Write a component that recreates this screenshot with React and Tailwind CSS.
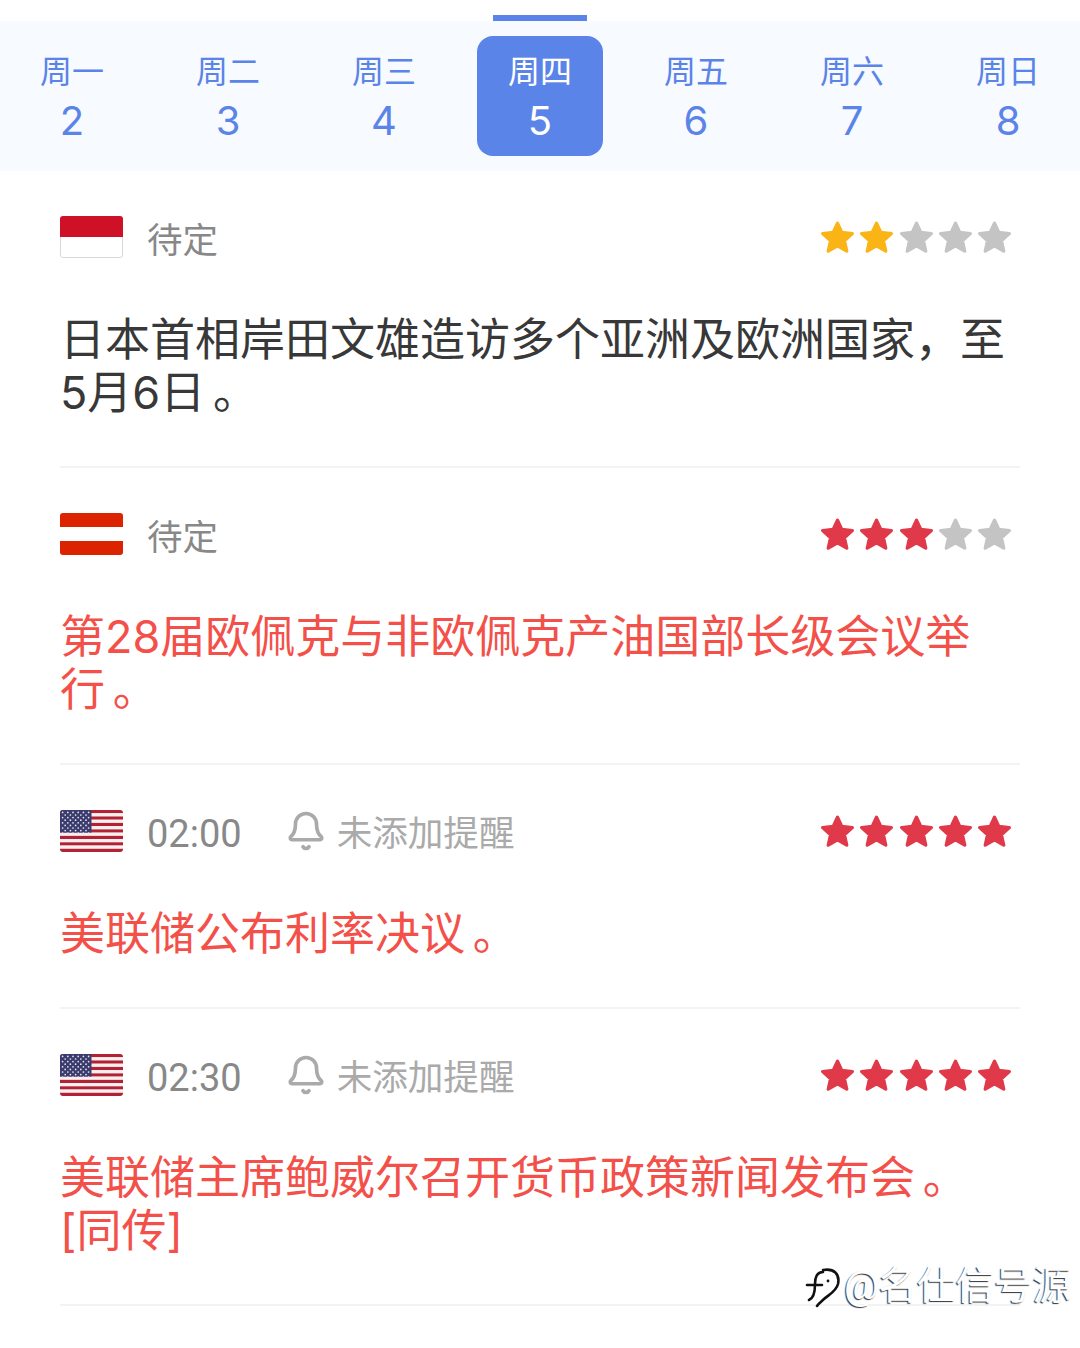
import React from "react";
import { Bell } from "lucide-react";

const days = [["周一","2"],["周二","3"],["周三","4"],["周四","5",true],["周五","6"],["周六","7"],["周日","8"]];

function Star({ color }) {
  return (
    <svg width="33" height="33" viewBox="1.5 1.5 30 30" className="block shrink-0">
      <path d="M16.5 3.5 L20.4 11.9 L30 12.9 L22.8 19.4 L24.9 28.9 L16.5 24 L8.1 28.9 L10.2 19.4 L3 12.9 L12.6 11.9 Z" fill={color} stroke={color} strokeWidth="3" strokeLinejoin="round" />
    </svg>
  );
}

function Stars({ n, color }) {
  return (
    <div className="flex gap-[6.2px]">
      {[0,1,2,3,4].map((i) => <Star key={i} color={i < n ? color : "#c4c4c4"} />)}
    </div>
  );
}

function IdFlag() {
  return (
    <div className="w-[63px] h-[42px] rounded-[3px] overflow-hidden flex flex-col">
      <div className="h-[21px] bg-[#ce1126]" />
      <div className="flex-1 bg-white border border-t-0 border-[#d8d8d8] rounded-b-[3px]" />
    </div>
  );
}

function AtFlag() {
  return (
    <div className="w-[63px] h-[42px] rounded-[3px] overflow-hidden flex flex-col">
      <div className="h-[14px] bg-[#dc2300]" />
      <div className="h-[14px] bg-white" />
      <div className="h-[14px] bg-[#dc2300]" />
    </div>
  );
}

function UsFlag() {
  const stripes = [];
  for (let i = 0; i < 13; i++) {
    stripes.push(<rect key={i} x="0" y={i * 42 / 13} width="63" height={42 / 13 + 0.05} fill={i % 2 ? "#f4f0f0" : "#b22234"} />);
  }
  const dots = [];
  for (let r = 0; r < 9; r++) {
    const cols = r % 2 ? 5 : 6;
    for (let c = 0; c < cols; c++) {
      dots.push(<circle key={r + "-" + c} cx={(r % 2 ? 5.2 : 2.6) + c * 5.2} cy={2.4 + r * 2.6} r="0.85" fill="#e8e8f4" />);
    }
  }
  return (
    <svg width="63" height="42" viewBox="0 0 63 42" className="block rounded-[3px] shrink-0">
      {stripes}
      <rect x="0" y="0" width="31.5" height="22.6" fill="#3c3b6e" />
      {dots}
    </svg>
  );
}

function Item({ flag, time, stars, starColor, red, children }) {
  return (
    <div className="mx-[60px] pt-[45px] pb-[47px] border-b-2 border-[#f3f3f3]">
      <div className="flex items-center h-[42px]">
        <div className="shrink-0">{flag}</div>
        {time ? (
          <>
            <span className="ml-[24px] pt-[6px] text-[38px] leading-[42px] text-[#888888]">{time}</span>
            <Bell size={42} strokeWidth={2.1} color="#aaaaaa" className="ml-[43px] shrink-0" />
            <span className="ml-[10px] pt-[6px] text-[35.6px] leading-[42px] text-[#aaaaaa]">未添加提醒</span>
          </>
        ) : (
          <span className="ml-[24px] pt-[8px] text-[35.5px] leading-[42px] text-[#888888]">待定</span>
        )}
        <div className="ml-auto mr-[9px]"><Stars n={stars} color={starColor} /></div>
      </div>
      <p className={"mt-[55px] text-[45px] leading-[53px] [word-spacing:-5px] font-['Inter','Noto_Sans_CJK_SC',sans-serif] " + (red ? "text-[#f4504a]" : "text-[#383838]")}>{children}</p>
    </div>
  );
}

export default function App() {
  return (
    <div className="relative w-[1080px] h-[1348px] overflow-hidden bg-white font-['Roboto','Noto_Sans_CJK_SC',sans-serif]">
      <div className="pt-[15px]">
        <div className="ml-[493px] w-[94px] h-[6px] bg-[#5b84e8]" />
        <div className="h-[150px] bg-[#f7faff] flex justify-center pt-[15px]">
          {days.map(([a, b, active]) => (
            <div key={a} className="w-[156px] shrink-0 flex justify-center">
              <div className={"w-[126px] h-[120px] rounded-[16px] flex flex-col items-center pt-[15px] " + (active ? "bg-[#5b84e8] text-white" : "text-[#5b84e8]")}>
                <span className="text-[32px] leading-[42px]">{a}</span>
                <span className="pt-[3px] text-[40px] leading-[50px] font-['Inter',sans-serif]">{b}</span>
              </div>
            </div>
          ))}
        </div>
      </div>
      <Item flag={<IdFlag />} stars={2} starColor="#fbb416">日本首相岸田文雄造访多个亚洲及欧洲国家，至5月6日 。</Item>
      <Item flag={<AtFlag />} stars={3} starColor="#e0394a" red>第28届欧佩克与非欧佩克产油国部长级会议举<span className="whitespace-nowrap inline-block">行 。</span></Item>
      <Item flag={<UsFlag />} time="02:00" stars={5} starColor="#e0394a" red>美联储公布利率决议 。</Item>
      <Item flag={<UsFlag />} time="02:30" stars={5} starColor="#e0394a" red>美联储主席鲍威尔召开货币政策新闻发布会 。<span className="whitespace-nowrap inline-block">[同传]</span></Item>
      <div className="absolute left-[804px] top-[1262px] flex items-center">
        <svg width="40" height="48" viewBox="0 0 40 48" className="shrink-0">
          <path d="M3 23 H18 M19 10 C13 10 11 15 11 22 C11 30 10 36 5 38 M19 8 C30 6 36 12 34 22 C32 30 24 33 20 37 C18 39 15 41 13 44" fill="none" stroke="#111111" strokeWidth="2.6" strokeLinecap="round" />
          <circle cx="24" cy="19" r="1.4" fill="#111111" />
        </svg>
        <span className="text-[38.5px] leading-[46px] text-white [text-shadow:-1px_1px_1px_#333333]">@名仕信号源</span>
      </div>
    </div>
  );
}
